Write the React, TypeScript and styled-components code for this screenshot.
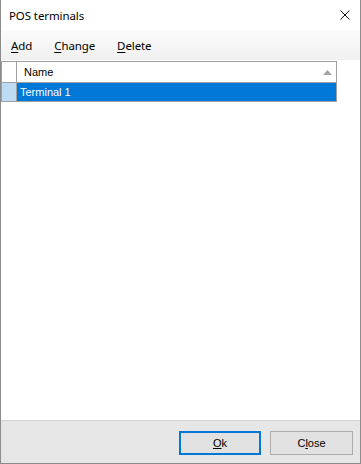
import React from 'react'
import styled, { createGlobalStyle } from 'styled-components'

const terminals = ['Terminal 1']

function App() {
  return (
    <>
      <GlobalStyle />
      <Window>
        <TitleBar>
          <Title>POS terminals</Title>
          <CloseIcon viewBox="0 0 10 10">
            <path d="M0.5 0.5 L9.5 9.5 M9.5 0.5 L0.5 9.5" stroke="#111" strokeWidth="1" />
          </CloseIcon>
        </TitleBar>
        <MenuBar>
          <MenuItem><u>A</u>dd</MenuItem>
          <MenuItem><u>C</u>hange</MenuItem>
          <MenuItem><u>D</u>elete</MenuItem>
        </MenuBar>
        <Body>
          <Grid>
            <HeaderRow>
              <RowHeadCell />
              <HeaderCell>
                Name
                <SortArrow viewBox="0 0 9 5">
                  <path d="M4.5 0 L9 5 L0 5 Z" fill="#a3a3a3" />
                </SortArrow>
              </HeaderCell>
            </HeaderRow>
            {terminals.map((t) => (
              <DataRow key={t}>
                <RowHeadCell selected />
                <DataCell selected>{t}</DataCell>
              </DataRow>
            ))}
          </Grid>
        </Body>
        <Footer>
          <Button primary><u>O</u>k</Button>
          <Button>C<u>l</u>ose</Button>
        </Footer>
      </Window>
    </>
  )
}

const GlobalStyle = createGlobalStyle`
  html, body {
    margin: 0;
    padding: 0;
    background: #fff;
  }
`
const Window = styled.div`
  width: 361px;
  height: 464px;
  box-sizing: border-box;
  border: 1px solid #8c8c8c;
  border-top: none;
  background: #fff;
  display: flex;
  flex-direction: column;
  font-family: 'Noto Sans', sans-serif;
`
const TitleBar = styled.div`
  height: 30px;
  display: flex;
  align-items: center;
  justify-content: space-between;
  padding: 0 10px 0 8px;
`
const Title = styled.span`
  font-size: 11.5px;
  letter-spacing: -0.1px;
  color: #000;
`
const CloseIcon = styled.svg`
  width: 10px;
  height: 10px;
`
const MenuBar = styled.div`
  height: 30px;
  display: flex;
  align-items: center;
  gap: 22px;
  padding-left: 10px;
  background: linear-gradient(#fbfbfb, #f0f0f0);
  font-size: 11.5px;
  letter-spacing: -0.1px;
`
const MenuItem = styled.span`
  color: #000;
  u {
    text-underline-offset: 2px;
  }
`
const Body = styled.div`
  flex: 1;
  background: #fff;
  padding-top: 1px;
`
const Grid = styled.div`
  width: 336px;
  box-sizing: border-box;
  border: 1px solid #a0a0a0;
  font-family: 'Liberation Sans', Arial, sans-serif;
  font-size: 11px;
`
const HeaderRow = styled.div`
  display: flex;
  height: 20px;
  border-bottom: 1px solid #a0a0a0;
`
const DataRow = styled.div`
  display: flex;
  height: 18px;
`
const RowHeadCell = styled.div<{ selected?: boolean }>`
  width: 14px;
  flex-shrink: 0;
  border-right: 1px solid #a0a0a0;
  background: ${(p) => (p.selected ? '#bcdcf4' : '#fff')};
`
const HeaderCell = styled.div`
  flex: 1;
  display: flex;
  align-items: center;
  justify-content: space-between;
  padding: 0 4px 0 7px;
  color: #000;
`
const SortArrow = styled.svg`
  width: 9px;
  height: 5px;
`
const DataCell = styled.div<{ selected?: boolean }>`
  flex: 1;
  display: flex;
  align-items: center;
  padding-left: 3px;
  background: ${(p) => (p.selected ? '#0078d7' : '#fff')};
  color: ${(p) => (p.selected ? '#fff' : '#000')};
`
const Footer = styled.div`
  height: 42px;
  background: #e6e6e6;
  border-top: 1px solid #d2d2d2;
  display: flex;
  align-items: center;
  justify-content: flex-end;
  gap: 9px;
  padding-right: 7px;
`
const Button = styled.button<{ primary?: boolean }>`
  width: ${(p) => (p.primary ? '82px' : '83px')};
  height: 24px;
  box-sizing: border-box;
  background: #e1e1e1;
  border: ${(p) => (p.primary ? '2px solid #0078d7' : '1px solid #adadad')};
  font-family: 'Liberation Sans', Arial, sans-serif;
  font-size: 11px;
  color: #000;
  padding: 0;
  margin-top: 1px;
`

export default App
